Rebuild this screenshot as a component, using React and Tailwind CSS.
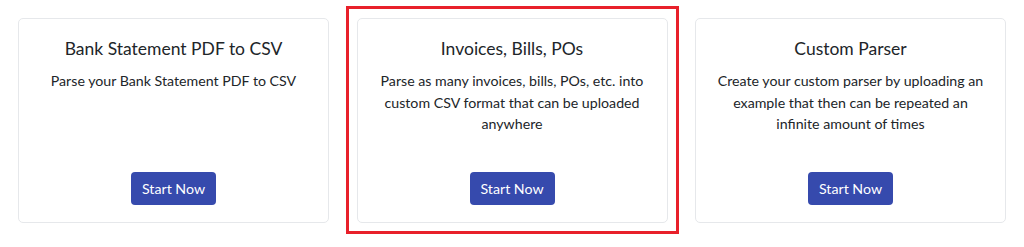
const cards = [
  {
    title: "Bank Statement PDF to CSV",
    text: "Parse your Bank Statement PDF to CSV",
  },
  {
    title: "Invoices, Bills, POs",
    text: "Parse as many invoices, bills, POs, etc. into custom CSV format that can be uploaded anywhere",
    highlight: true,
  },
  {
    title: "Custom Parser",
    text: "Create your custom parser by uploading an example that then can be repeated an infinite amount of times",
  },
];

function Card({ title, text, highlight }) {
  return (
    <div className="relative">
      {highlight && (
        <div className="pointer-events-none absolute -inset-x-[11px] -top-[12px] -bottom-[11px] border-[3px] border-[#e8202a]" />
      )}
      <div className="flex h-[205px] flex-col items-center rounded-[5px] border border-[#e6e8eb] bg-white px-4 pt-[17px] pb-[17px] text-center">
        <h2 className="text-[17.5px] leading-[26px] text-[#212529]">{title}</h2>
        <p className="mt-[8px] text-[14.2px] leading-[21.5px] text-[#212529]">{text}</p>
        <button className="mt-auto h-[33px] w-[85px] rounded-[4px] bg-[#364aad] text-[14.2px] text-white">
          Start Now
        </button>
      </div>
    </div>
  );
}

export default function App() {
  return (
    <div
      className="h-[247px] w-[1024px] bg-white"
      style={{ fontFamily: "Lato, 'Noto Sans', sans-serif" }}
    >
      <div className="grid grid-cols-3 gap-x-[27.5px] px-[18px] pt-[18px]">
        {cards.map((c) => (
          <Card key={c.title} {...c} />
        ))}
      </div>
    </div>
  );
}
